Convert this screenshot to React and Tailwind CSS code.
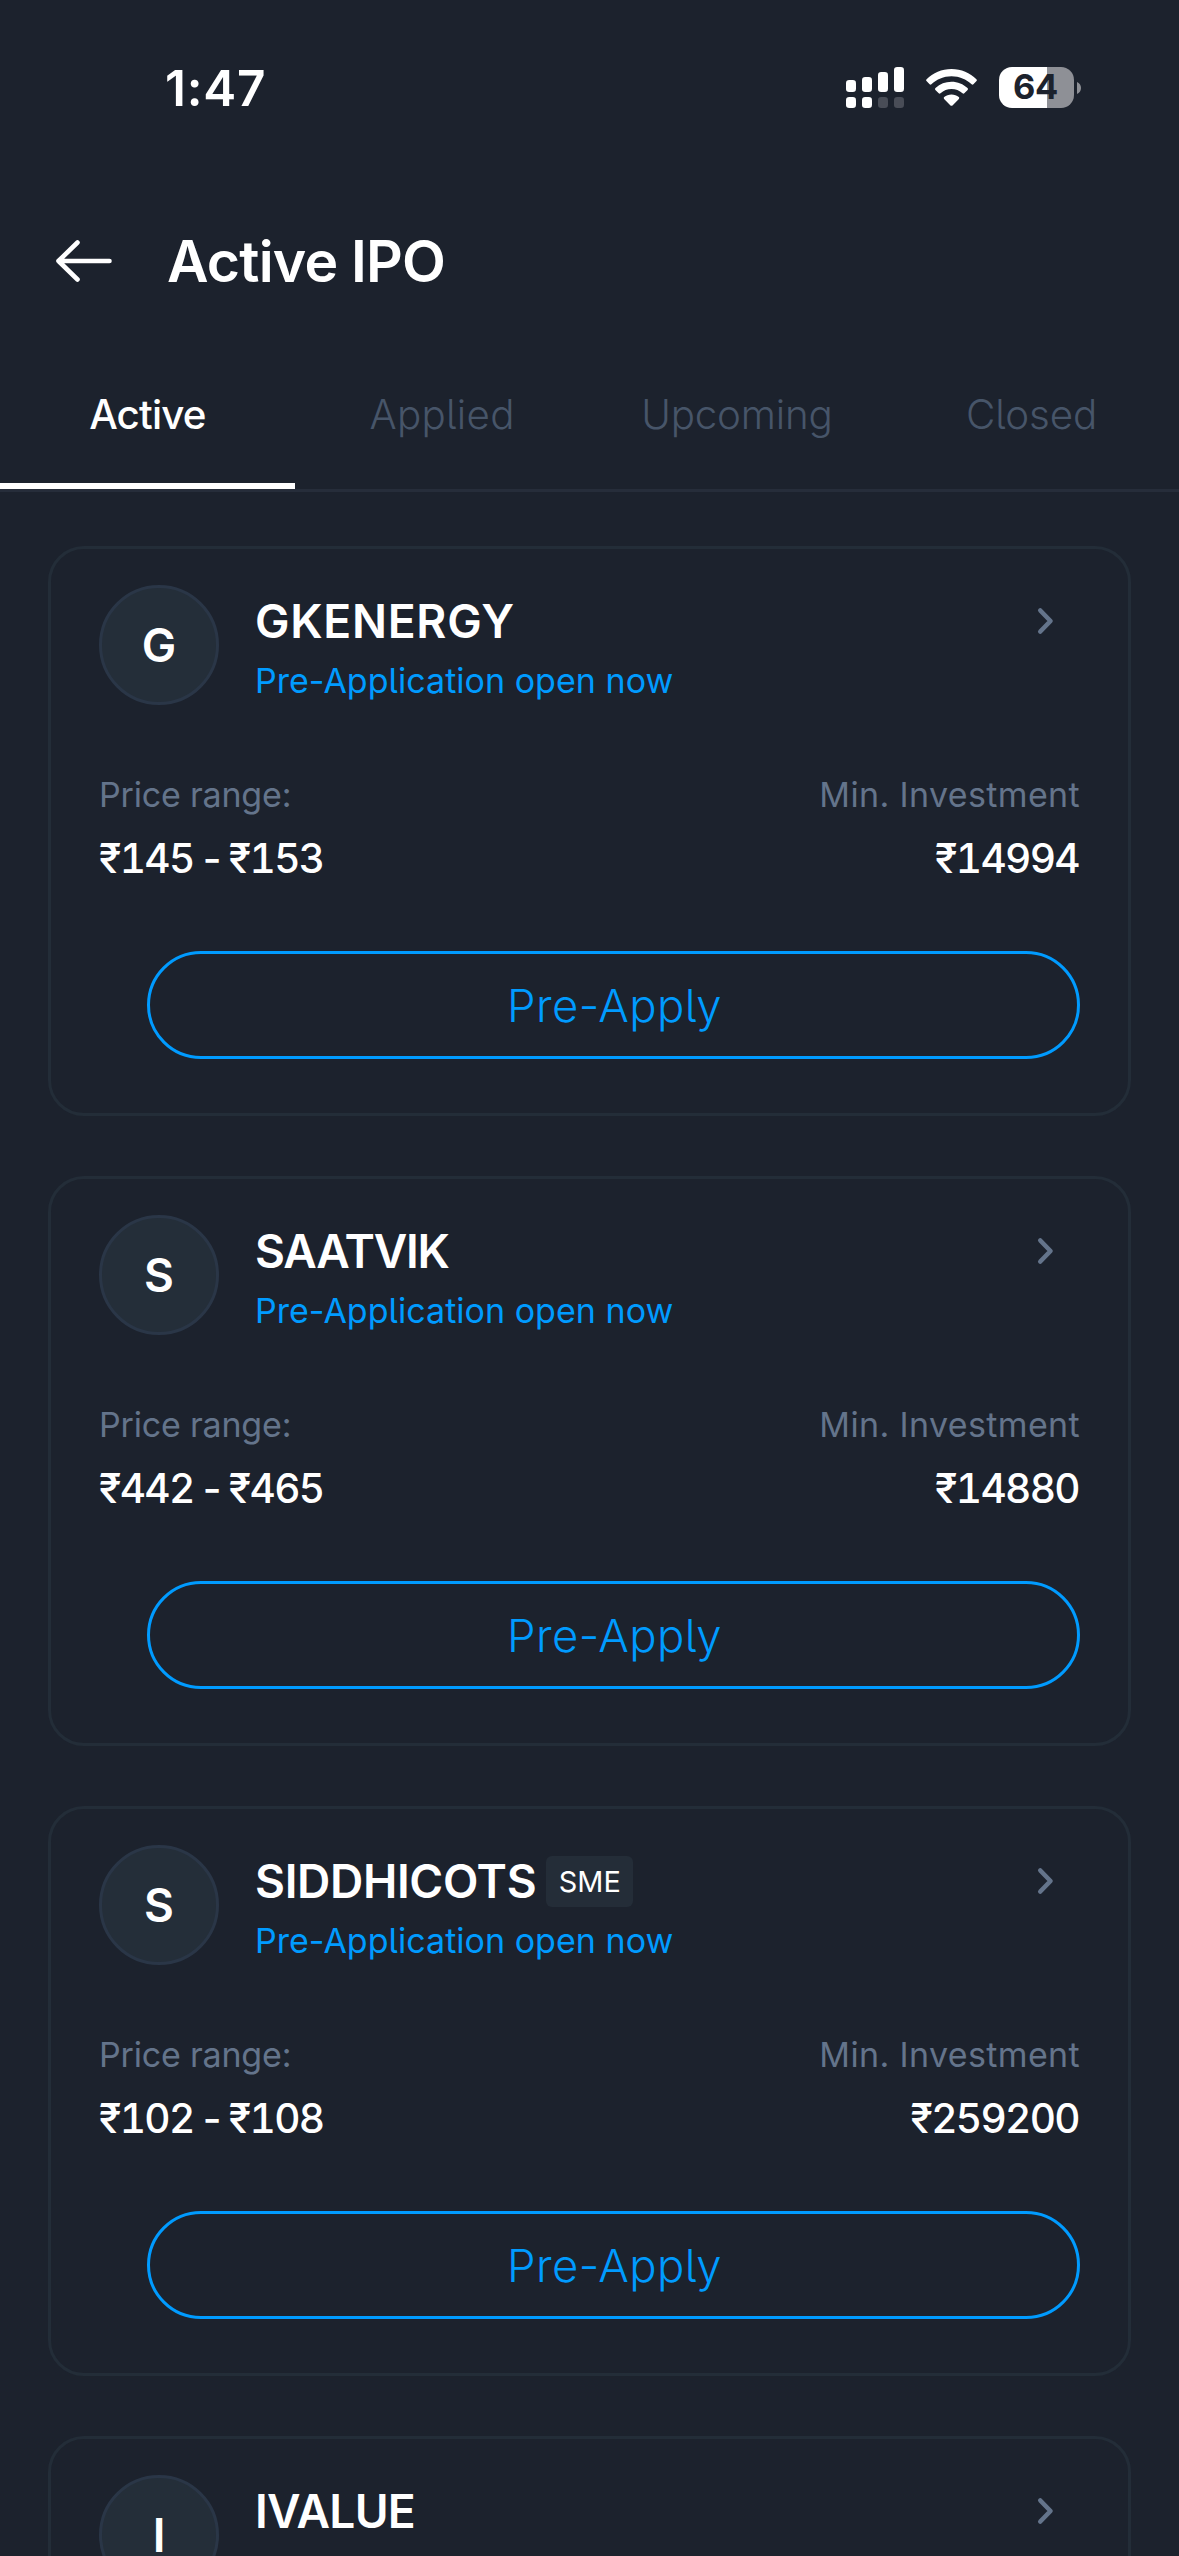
import React from "react";

const tabs = [
  { label: "Active", className: "font-medium text-white tracking-[-0.85px]", active: true },
  { label: "Applied", className: "font-light text-[#475569] tracking-[0.3px]" },
  { label: "Upcoming", className: "font-light text-[#475569] tracking-[-0.2px]" },
  { label: "Closed", className: "font-light text-[#475569] tracking-[-0.1px]" },
];

const ipos = [
  { name: "GKENERGY", tracking: "tracking-[0.72px]", price: "₹145 - ₹153", min: "₹14994" },
  { name: "SAATVIK", tracking: "tracking-[-1.25px]", price: "₹442 - ₹465", min: "₹14880" },
  { name: "SIDDHICOTS", tracking: "tracking-[-0.35px]", price: "₹102 - ₹108", min: "₹259200", sme: true },
  { name: "IVALUE", tracking: "tracking-[-0.7px]" },
];

function StatusBar() {
  return (
    <div className="flex h-[176px] shrink-0 items-center pl-[165px] pr-[98px]">
      <span className="pt-[2px] text-[49.5px] font-semibold leading-none tracking-[0.77px]">1:47</span>
      <div className="mb-px ml-auto flex items-center">
        <svg className="h-[41px] w-[58px]" viewBox="0 0 58 41" fill="#fff">
          <rect x="0" y="13" width="10" height="12" rx="3.2" />
          <rect x="16" y="10" width="10" height="15" rx="3.2" />
          <rect x="32" y="5" width="10" height="20" rx="3.2" />
          <rect x="48" y="0" width="10" height="25" rx="3.2" />
          <rect x="0" y="30" width="10" height="11" rx="3.2" />
          <rect x="16" y="30" width="10" height="11" rx="3.2" />
          <rect x="32" y="30" width="10" height="11" rx="3.2" fill="#494d57" />
          <rect x="48" y="30" width="10" height="11" rx="3.2" fill="#494d57" />
        </svg>
        <svg className="ml-[22px] h-[37px] w-[51px]" viewBox="0 0 51 37" fill="#fff">
          <path d="M25.5 0C35.3 0 44 3.9 50.4 10.2c.6.6.6 1.3.1 1.9l-3.1 3.2c-.5.5-1.2.5-1.8 0C40.4 10.3 33.3 7.3 25.5 7.3S10.6 10.3 5.4 15.3c-.6.5-1.3.5-1.8 0L.5 12.1c-.5-.6-.5-1.3.1-1.9C7 3.9 15.7 0 25.5 0Z" />
          <path d="M25.5 12.8c6.2 0 11.8 2.4 16 6.3.6.6.6 1.3.1 1.9l-3.3 3.3c-.5.5-1.2.5-1.8 0a16.2 16.2 0 0 0-22 0c-.6.5-1.3.5-1.8 0L9.4 21c-.5-.6-.5-1.3.1-1.9a23.4 23.4 0 0 1 16-6.3Z" />
          <path d="M25.5 25.5c2.8 0 5.3 1 7.3 2.6.6.5.6 1.2.1 1.8l-6.4 6.5c-.6.6-1.4.6-2 0l-6.4-6.5c-.5-.6-.5-1.3.1-1.8 2-1.6 4.5-2.6 7.3-2.6Z" />
        </svg>
        <div className="ml-[22px] flex h-[41px] w-[75px] items-center justify-center rounded-[13px] bg-[linear-gradient(90deg,#fff_48px,#8e9096_48px)]">
          <span className="ml-[-2px] text-[34.4px] font-bold leading-none tracking-[-0.3px] text-[#1c222d]">64</span>
        </div>
        <svg className="ml-[3px] h-[12px] w-[4px]" viewBox="0 0 4 12" fill="#8e9096">
          <path d="M0 0C2.4 1 4 3.3 4 6S2.4 11 0 12Z" />
        </svg>
      </div>
    </div>
  );
}

function IpoCard({ ipo }) {
  return (
    <article className="h-[570px] shrink-0 rounded-[36px] border-[3px] border-[#232d38] px-[48px] pt-[36px]">
      <div className="flex">
        <div className="flex h-[120px] w-[120px] shrink-0 items-center justify-center rounded-full border-[3px] border-[#2a3647] bg-[#242e39] text-[46px] font-semibold leading-none">
          {ipo.name[0]}
        </div>
        <div className="ml-[36px]">
          <div className="flex h-[72px] items-center">
            <h2 className={"text-[46.1px] font-semibold leading-none " + ipo.tracking}>{ipo.name}</h2>
            {ipo.sme && (
              <span className="ml-[10px] flex h-[51px] w-[87px] items-center justify-center rounded-[6px] bg-[#242d38] pt-[2px] text-[28.9px] leading-none">
                SME
              </span>
            )}
          </div>
          {ipo.price && (
            <p className="text-[34px] leading-[48px] tracking-[0.03px] text-[#009bff]">Pre-Application open now</p>
          )}
        </div>
        <div className="ml-auto mr-[26px] flex h-[72px] items-center">
          <svg className="h-[28px] w-[17px]" viewBox="0 0 17 28" fill="none" stroke="#64748b" strokeWidth="4.6" strokeLinecap="round" strokeLinejoin="round">
            <path d="M3.3 3.5 13.5 14 3.3 24.5" />
          </svg>
        </div>
      </div>
      {ipo.price && (
        <>
          <div className="mt-[59px] flex justify-between">
            <div>
              <p className="text-[34px] leading-[61px] tracking-[-0.19px] text-[#64748b]">Price range:</p>
              <p className="text-[40.6px] font-medium leading-[68px] tracking-[-1.65px] tabular-nums [word-spacing:-4px]">
                {ipo.price}
              </p>
            </div>
            <div className="text-right">
              <p className="text-[34px] leading-[61px] tracking-[0.36px] text-[#64748b]">Min. Investment</p>
              <p className="mr-px text-[40.6px] font-medium leading-[68px] tracking-[-1.65px] tabular-nums">{ipo.min}</p>
            </div>
          </div>
          <button className="ml-[48px] mt-[58px] flex h-[108px] w-[933px] items-center justify-center rounded-full border-[3px] border-[#009bff] pl-[2px] pt-[2px] text-[45.4px] font-light leading-none tracking-[0.46px] text-[#009bff]">
            Pre-Apply
          </button>
        </>
      )}
    </article>
  );
}

export default function App() {
  return (
    <div className="flex h-[2556px] w-[1179px] flex-col overflow-hidden bg-[#1c222d] font-['Inter',sans-serif] text-white [font-feature-settings:'cv05']">
      <StatusBar />
      <header className="flex h-[170px] shrink-0 items-center pl-[55px]">
        <svg className="h-[44px] w-[58px]" viewBox="0 0 58 44" fill="none" stroke="#fff" strokeWidth="4.6" strokeLinecap="round" strokeLinejoin="round">
          <path d="M54.5 22H3.5M22.5 3.5 3.5 22l19 18.5" />
        </svg>
        <h1 className="ml-[54px] pt-[2px] text-[57.1px] font-semibold leading-none tracking-[-0.8px]">Active IPO</h1>
      </header>
      <nav className="grid shrink-0 grid-cols-4 border-b-[3px] border-[#262d3a]">
        {tabs.map((tab) => (
          <div
            key={tab.label}
            className={
              "flex h-[143px] items-center justify-center border-b-[6px] pt-[2px] text-[40.3px] leading-none " +
              (tab.active ? "border-white " : "border-transparent ") +
              tab.className
            }
          >
            {tab.label}
          </div>
        ))}
      </nav>
      <main className="mt-[54px] flex min-h-0 flex-1 flex-col gap-[60px] overflow-hidden px-[48px]">
        {ipos.map((ipo) => (
          <IpoCard key={ipo.name} ipo={ipo} />
        ))}
      </main>
    </div>
  );
}
